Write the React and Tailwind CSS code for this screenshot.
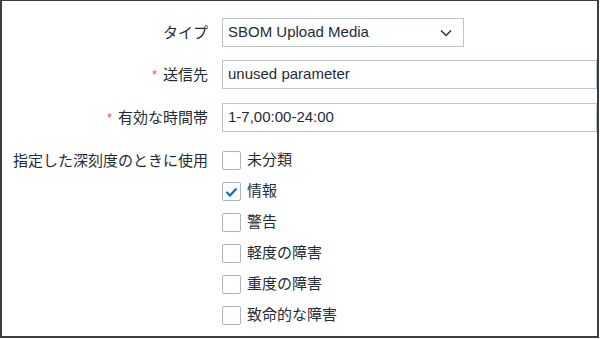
import React from "react";

const severities = [
  { label: "未分類", checked: false },
  { label: "情報", checked: true },
  { label: "警告", checked: false },
  { label: "軽度の障害", checked: false },
  { label: "重度の障害", checked: false },
  { label: "致命的な障害", checked: false },
];

const font = { fontFamily: '"Liberation Sans", Arial, "Noto Sans CJK JP", sans-serif' };

const Label = ({ children, required }) => (
  <div className="w-[206px] shrink-0 text-right text-[15px] text-[#1f2c33] leading-[29px]">
    {required && <span className="text-[#e45959] mr-1.5 text-[13px] align-top">*</span>}
    {children}
  </div>
);

const App = () => {
  return (
    <div className="w-[600px] h-[339px] bg-white" style={font}>
      <div className="w-[599px] h-[338px] border-2 border-t border-[#3d3d3d] overflow-hidden">
        <div className="pt-[17px] flex flex-col">
          <div className="flex items-center gap-[14px]">
            <Label>タイプ</Label>
            <div className="w-[242px] h-[29px] border border-[#bcc4cc] flex items-center justify-between pl-[5px] pr-[11px] text-[15px] text-[#1f2c33]">
              <span>SBOM Upload Media</span>
              <svg width="12" height="8" viewBox="0 0 12 8" fill="none">
                <path d="M1 1.5l5 5 5-5" stroke="#333" strokeWidth="1.5" />
              </svg>
            </div>
          </div>

          <div className="flex items-center gap-[14px] mt-[13px]">
            <Label required>送信先</Label>
            <div className="w-[400px] h-[29px] border border-[#bcc4cc] flex items-center pl-[5px] text-[15px] text-[#1f2c33]">
              unused parameter
            </div>
          </div>

          <div className="flex items-center gap-[14px] mt-[14px]">
            <Label required>有効な時間帯</Label>
            <div className="w-[400px] h-[29px] border border-[#bcc4cc] flex items-center pl-[5px] text-[15px] text-[#1f2c33]">
              1-7,00:00-24:00
            </div>
          </div>

          <div className="flex items-start gap-[14px] mt-[19px]">
            <div className="w-[206px] shrink-0 text-right text-[15px] text-[#1f2c33] leading-[19px]">
              指定した深刻度のときに使用
            </div>
            <div className="flex flex-col gap-[12px]">
              {severities.map((s) => (
                <div key={s.label} className="flex items-center gap-[6px] h-[19px]">
                  <div className="w-[19px] h-[19px] border border-[#acb4bc] rounded-[2px] flex items-center justify-center bg-white">
                    {s.checked && (
                      <svg width="13" height="10" viewBox="0 0 13 10" fill="none">
                        <path d="M1.5 5l3.5 3.5 6.5-7" stroke="#0b6fc0" strokeWidth="2.2" />
                      </svg>
                    )}
                  </div>
                  <span className="text-[15px] text-[#1f2c33]">{s.label}</span>
                </div>
              ))}
            </div>
          </div>
        </div>
      </div>
    </div>
  );
};

export default App;
